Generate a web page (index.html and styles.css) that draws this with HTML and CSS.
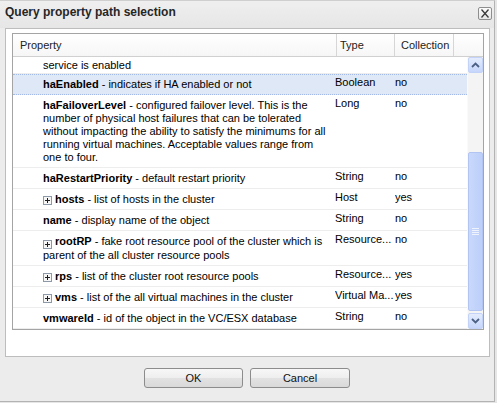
FILE: index.html
```html
<!DOCTYPE html>
<html>
<head>
<meta charset="utf-8">
<title>Query property path selection</title>
<link rel="stylesheet" href="styles.css">
</head>
<body>
<div class="dialog">
  <div class="titlebar">
    <span class="title">Query property path selection</span>
    <span class="close"><svg width="12" height="11" viewBox="0 0 12 11"><path d="M2.5 1.5l7 8M9.5 1.5l-7 8" stroke="#3a3a3a" stroke-width="1.3" fill="none"/></svg></span>
  </div>
  <div class="panel">
    <div class="grid">
      <div class="ghead">
        <div class="hc hc-prop">Property</div>
        <div class="hc hc-type">Type</div>
        <div class="hc hc-coll">Collection</div>
        <div class="hc hc-fill"></div>
      </div>
      <div class="gbody">
        <div class="rows">
          <div class="rows-inner">
            <div class="row row-partial">
              <div class="cell prop">service is enabled</div>
              <div class="cell type"></div>
              <div class="cell coll"></div>
            </div>
            <div class="row selected">
              <div class="cell prop"><b>haEnabled</b> - indicates if HA enabled or not</div>
              <div class="cell type">Boolean</div>
              <div class="cell coll">no</div>
            </div>
            <div class="row">
              <div class="cell prop"><b>haFailoverLevel</b> - configured failover level. This is the<br>number of physical host failures that can be tolerated<br>without impacting the ability to satisfy the minimums for all<br>running virtual machines. Acceptable values range from<br>one to four.</div>
              <div class="cell type">Long</div>
              <div class="cell coll">no</div>
            </div>
            <div class="row">
              <div class="cell prop"><b>haRestartPriority</b> - default restart priority</div>
              <div class="cell type">String</div>
              <div class="cell coll">no</div>
            </div>
            <div class="row">
              <div class="cell prop"><span class="expander"><svg width="9" height="9" viewBox="0 0 9 9"><rect x="0.5" y="0.5" width="8" height="8" fill="#f7f7f7" stroke="#8d99a6"/><path d="M2 4.5h5M4.5 2v5" stroke="#1e1e1e" stroke-width="1"/></svg></span><b>hosts</b> - list of hosts in the cluster</div>
              <div class="cell type">Host</div>
              <div class="cell coll">yes</div>
            </div>
            <div class="row">
              <div class="cell prop"><b>name</b> - display name of the object</div>
              <div class="cell type">String</div>
              <div class="cell coll">no</div>
            </div>
            <div class="row">
              <div class="cell prop"><span class="expander low"><svg width="9" height="9" viewBox="0 0 9 9"><rect x="0.5" y="0.5" width="8" height="8" fill="#f7f7f7" stroke="#8d99a6"/><path d="M2 4.5h5M4.5 2v5" stroke="#1e1e1e" stroke-width="1"/></svg></span><b>rootRP</b> - fake root resource pool of the cluster which is<br>parent of the all cluster resource pools</div>
              <div class="cell type">Resource...</div>
              <div class="cell coll">no</div>
            </div>
            <div class="row">
              <div class="cell prop"><span class="expander"><svg width="9" height="9" viewBox="0 0 9 9"><rect x="0.5" y="0.5" width="8" height="8" fill="#f7f7f7" stroke="#8d99a6"/><path d="M2 4.5h5M4.5 2v5" stroke="#1e1e1e" stroke-width="1"/></svg></span><b>rps</b> - list of the cluster root resource pools</div>
              <div class="cell type">Resource...</div>
              <div class="cell coll">yes</div>
            </div>
            <div class="row">
              <div class="cell prop"><span class="expander"><svg width="9" height="9" viewBox="0 0 9 9"><rect x="0.5" y="0.5" width="8" height="8" fill="#f7f7f7" stroke="#8d99a6"/><path d="M2 4.5h5M4.5 2v5" stroke="#1e1e1e" stroke-width="1"/></svg></span><b>vms</b> - list of the all virtual machines in the cluster</div>
              <div class="cell type">Virtual Ma...</div>
              <div class="cell coll">yes</div>
            </div>
            <div class="row">
              <div class="cell prop"><b>vmwareId</b> - id of the object in the VC/ESX database</div>
              <div class="cell type">String</div>
              <div class="cell coll">no</div>
            </div>
          </div>
        </div>
        <div class="vscroll">
          <div class="sbtn"><svg width="9" height="6" viewBox="0 0 9 6"><path d="M1 5l3.5-3.5L8 5" stroke="#4d6185" stroke-width="1.8" fill="none"/></svg></div>
          <div class="track-top"></div>
          <div class="thumb"><svg width="7" height="7" viewBox="0 0 7 7"><path d="M0 0.5h7M0 2.5h7M0 4.5h7M0 6.5h7" stroke="#eef3fe" stroke-width="1"/></svg></div>
          <div class="track-bottom"></div>
          <div class="sbtn"><svg width="9" height="6" viewBox="0 0 9 6"><path d="M1 1l3.5 3.5L8 1" stroke="#4d6185" stroke-width="1.8" fill="none"/></svg></div>
        </div>
      </div>
    </div>
  </div>
  <div class="buttons">
    <button class="btn btn-ok">OK</button>
    <button class="btn btn-cancel">Cancel</button>
  </div>
</div>
</body>
</html>
```

FILE: styles.css
```css
html, body {
  margin: 0;
  padding: 0;
  background: #e6e6e6;
}

.dialog {
  width: 495px;
  height: 402px;
  box-sizing: border-box;
  background: #ececec;
  border-right: 1px solid #b3b3b3;
  border-bottom: 1px solid #b3b3b3;
  border-top: 1px solid #cfcfcf;
  font-family: "Liberation Sans", Arial, sans-serif;
  display: flex;
  flex-direction: column;
}

.titlebar {
  height: 27px;
  flex: none;
  display: flex;
  justify-content: space-between;
  align-items: flex-start;
  padding: 0 2px 0 5px;
  background: linear-gradient(#efefef, #e6e6e6);
}

.title {
  font-size: 12px;
  font-weight: bold;
  color: #262626;
  line-height: 23px;
}

.close {
  margin-top: 6px;
  width: 12px;
  height: 11px;
  border: 1px solid #8e8e8e;
  border-radius: 2px;
  background: linear-gradient(#fbfbfb, #e6e6e6);
  display: flex;
}

.panel {
  margin-left: 5px;
  width: 485px;
  height: 329px;
  box-sizing: border-box;
  border: 1px solid #bdbdbd;
  background: #fff;
  padding: 4px 5px 0 6px;
  flex: none;
}

.grid {
  height: 297px;
  box-sizing: border-box;
  border: 1px solid #a4a4a4;
  display: flex;
  flex-direction: column;
  font-size: 11px;
  color: #000;
}

.ghead {
  display: flex;
  flex: none;
  background: linear-gradient(#ffffff, #f6f6f6);
  border-bottom: 1px solid #d0d0d0;
}

.hc {
  box-sizing: border-box;
  height: 22px;
  padding-top: 4px;
  line-height: 15px;
  color: #222;
  border-right: 1px solid #d6d6d6;
  white-space: nowrap;
}

.hc-prop { width: 324px; padding-left: 7px; }
.hc-type { width: 58px; padding-left: 3px; }
.hc-coll { width: 59px; padding-left: 6px; }
.hc-fill { flex: 1; border-right: none; }

.gbody {
  flex: 1;
  display: flex;
  min-height: 0;
}

.rows {
  flex: 1;
  overflow: hidden;
}

.rows-inner {
  margin-top: -1px;
}

.row {
  display: flex;
  border-top: 1px solid #fff;
  border-bottom: 1px solid #ededed;
}

.row.selected {
  background: #dfe8f6;
  border-top: 1px dotted #a3bae9;
  border-bottom: 1px dotted #a3bae9;
}

.cell {
  box-sizing: border-box;
  line-height: 13px;
  white-space: nowrap;
  overflow: hidden;
}

.prop {
  width: 322px;
  padding: 3px 0 3px 30px;
  overflow: visible;
}

.row-partial .prop {
  padding-top: 2px;
  padding-bottom: 1px;
}

.type {
  width: 60px;
  padding: 1px 4px 0 0;
}

.coll {
  padding: 1px 0 0 0;
}

.expander {
  display: inline-block;
  width: 9px;
  height: 9px;
  margin-right: 3px;
  vertical-align: -2px;
}

.expander svg { display: block; }

.expander.low {
  vertical-align: -4px;
}

.vscroll {
  width: 16px;
  flex: none;
  display: flex;
  flex-direction: column;
  background: #f4f4f4;
  border-left: 1px solid #fafafa;
  box-sizing: border-box;
}

.sbtn {
  height: 16px;
  flex: none;
  box-sizing: border-box;
  border: 1px solid #c3d3f7;
  border-radius: 2px;
  background: linear-gradient(#e4ecfd, #c6d6fb);
  display: flex;
  align-items: center;
  justify-content: center;
}

.track-top { height: 79px; flex: none; }
.track-bottom { flex: 1; }

.thumb {
  height: 159px;
  flex: none;
  box-sizing: border-box;
  border: 1px solid #b2c5f2;
  border-radius: 2px;
  background: linear-gradient(to right, #c9d8fc, #bccff9);
  display: flex;
  align-items: center;
  justify-content: center;
}

.thumb svg { display: block; }

.buttons {
  display: flex;
  justify-content: center;
  gap: 7px;
  margin-top: 11px;
}

.btn {
  height: 20px;
  box-sizing: border-box;
  border: 1px solid #8c8c8c;
  border-radius: 3px;
  background: linear-gradient(#f7f7f7 0%, #eeeeee 50%, #e2e2e2 51%, #d9d9d9 100%);
  font-family: "Liberation Sans", Arial, sans-serif;
  font-size: 11px;
  color: #111;
  padding: 0;
  line-height: 18px;
}

.btn-ok { width: 99px; }
.btn-cancel { width: 100px; }
```
